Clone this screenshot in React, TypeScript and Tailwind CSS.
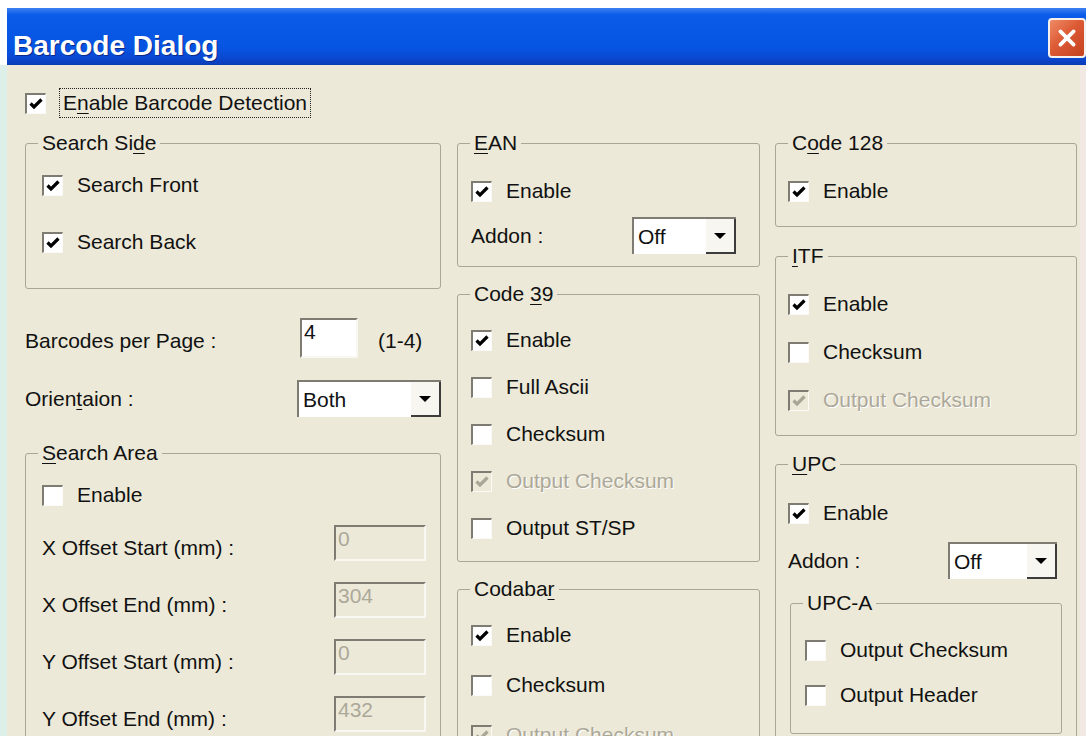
import type { ReactNode } from "react";

// text with one access-key letter underlined
function Label({ text, u }: { text: string; u?: number }) {
  if (u === undefined) return <>{text}</>;
  return (
    <>
      {text.slice(0, u)}
      <span className="underline decoration-1 underline-offset-[3px]">{text[u]}</span>
      {text.slice(u + 1)}
    </>
  );
}

function Box({ checked, disabled }: { checked?: boolean; disabled?: boolean }) {
  return (
    <span
      className={`flex h-[21px] w-[21px] shrink-0 items-center justify-center border-t-2 border-l-2 border-r border-b border-t-[#7d7b72] border-l-[#7d7b72] border-r-[#fbfaf6] border-b-[#fbfaf6] ${
        disabled ? "bg-[#ece9d8]" : "bg-white"
      }`}
    >
      {checked && (
        <svg viewBox="0 0 16 16" className="h-[16px] w-[16px]">
          <path
            d="M2.5 7.5 L6 11 L13.5 3.5"
            fill="none"
            stroke={disabled ? "#a9a698" : "#000"}
            strokeWidth="3.2"
          />
        </svg>
      )}
    </span>
  );
}

function Check({
  label,
  checked,
  disabled,
  className = "",
}: {
  label: string;
  checked?: boolean;
  disabled?: boolean;
  className?: string;
}) {
  return (
    <div className={`flex h-[28px] items-center gap-[14px] ${className}`}>
      <Box checked={checked} disabled={disabled} />
      <span className={disabled ? "text-[#aca899] [text-shadow:1px_1px_0_#fff]" : ""}>{label}</span>
    </div>
  );
}

function Edit({ value, disabled, className = "" }: { value: string; disabled?: boolean; className?: string }) {
  return (
    <div
      className={`shrink-0 border-t-2 border-l-2 border-r-2 border-b-2 border-t-[#7d7b72] border-l-[#7d7b72] border-r-[#f8f7f2] border-b-[#f8f7f2] px-[2px] leading-[24px] ${
        disabled ? "bg-[#ece9d8] text-[#aca899]" : "bg-white"
      } ${className}`}
    >
      {value}
    </div>
  );
}

function Combo({ value, className = "" }: { value: string; className?: string }) {
  return (
    <div className={`flex shrink-0 border-t-2 border-l-2 border-t-[#7d7b72] border-l-[#7d7b72] bg-white ${className}`}>
      <span className="flex-1 self-center pl-[4px]">{value}</span>
      <span className="flex w-[30px] items-center justify-center border-r-2 border-b-2 border-[#3c3c3c] bg-[#f7f6f1]">
        <svg viewBox="0 0 12 6" className="h-[6px] w-[12px]">
          <path d="M0 0h12L6 6z" fill="#000" />
        </svg>
      </span>
    </div>
  );
}

function Group({
  label,
  u,
  className = "",
  children,
}: {
  label: string;
  u?: number;
  className?: string;
  children: ReactNode;
}) {
  return (
    <fieldset className={`min-w-0 shrink-0 rounded-[3px] border border-[#a8a698] ${className}`}>
      <legend className="ml-[12px] px-[4px] leading-[24px]">
        <Label text={label} u={u} />
      </legend>
      {children}
    </fieldset>
  );
}

const offsets = [
  { label: "X Offset Start (mm) :", value: "0", mt: "mt-[16px]" },
  { label: "X Offset End (mm) :", value: "304", mt: "mt-[21px]" },
  { label: "Y Offset Start (mm) :", value: "0", mt: "mt-[21px]" },
  { label: "Y Offset End (mm) :", value: "432", mt: "mt-[21px]" },
];

export default function App() {
  return (
    <div className="flex h-[736px] w-[1086px] flex-col overflow-hidden bg-white font-['Liberation_Sans',Arial,sans-serif]">
      <div className="h-[8px] shrink-0" />

      {/* caption bar */}
      <div className="ml-[7px] flex h-[57px] shrink-0 items-start justify-between bg-[linear-gradient(180deg,#3d80f2_0%,#0b5be8_12%,#0654e2_70%,#0a48d0_88%,#0b3cb6_100%)]">
        <span className="ml-[6px] mt-[24px] text-[28px] font-bold leading-[28px] text-white [text-shadow:1px_1px_0_#0a2a8a]">
          Barcode Dialog
        </span>
        <div className="mt-[10px] flex h-[40px] w-[38px] items-center justify-center rounded-[4px] border-2 border-[#f4f1ee] bg-[linear-gradient(135deg,#ef8c67_0%,#dc5a34_45%,#c4421f_100%)]">
          <svg viewBox="0 0 20 20" className="h-[22px] w-[22px]">
            <path d="M4 4 L16 16 M16 4 L4 16" stroke="#fff" strokeWidth="3.4" strokeLinecap="round" />
          </svg>
        </div>
      </div>

      <div className="flex min-h-0 flex-1">
        <div className="w-[7px] shrink-0 bg-[#dcefe9]" />

        <div className="flex-1 bg-[#ece9d8] pl-[18px] pt-[23px] text-[21px] leading-[24px] text-[#111]">
          <div className="flex h-[30px] items-center">
            <Box checked />
            <span className="ml-[13px] flex h-[30px] items-center border border-dotted border-[#222] px-[3px]">
              <Label text="Enable Barcode Detection" u={1} />
            </span>
          </div>

          <div className="mt-[13px] flex items-start">
            {/* left column */}
            <div className="flex w-[416px] shrink-0 flex-col">
              <Group label="Search Side" u={9} className="h-[158px]">
                <div className="flex flex-col pl-[16px]">
                  <Check className="mt-[16px]" label="Search Front" checked />
                  <Check className="mt-[29px]" label="Search Back" checked />
                </div>
              </Group>

              <div className="mt-[29px] flex items-start">
                <span className="mt-[11px] w-[275px]">Barcodes per Page :</span>
                <Edit value="4" className="h-[40px] w-[58px]" />
                <span className="ml-[20px] mt-[11px]">(1-4)</span>
              </div>

              <div className="mt-[22px] flex items-center">
                <span className="w-[272px]">
                  <Label text="Orientaion :" u={5} />
                </span>
                <Combo value="Both" className="h-[37px] w-[144px]" />
              </div>

              <Group label="Search Area" u={0} className="mt-[24px] h-[320px]">
                <div className="flex flex-col pl-[16px]">
                  <Check className="mt-[16px]" label="Enable" />
                  {offsets.map((o) => (
                    <div key={o.label} className={`flex items-start ${o.mt}`}>
                      <span className="mt-[11px] w-[292px]">{o.label}</span>
                      <Edit value={o.value} disabled className="h-[36px] w-[92px]" />
                    </div>
                  ))}
                </div>
              </Group>
            </div>

            {/* middle column */}
            <div className="ml-[16px] flex w-[303px] shrink-0 flex-col">
              <Group label="EAN" u={0} className="h-[136px]">
                <div className="flex flex-col pl-[13px]">
                  <Check className="mt-[22px]" label="Enable" checked />
                  <div className="mt-[12px] flex items-center">
                    <span className="w-[161px]">Addon :</span>
                    <Combo value="Off" className="h-[37px] w-[104px]" />
                  </div>
                </div>
              </Group>

              <Group label="Code 39" u={5} className="mt-[15px] h-[280px]">
                <div className="flex flex-col gap-[19px] pl-[13px] pt-[20px]">
                  <Check label="Enable" checked />
                  <Check label="Full Ascii" />
                  <Check label="Checksum" />
                  <Check label="Output Checksum" checked disabled />
                  <Check label="Output ST/SP" />
                </div>
              </Group>

              <Group label="Codabar" u={6} className="mt-[15px] h-[200px]">
                <div className="flex flex-col gap-[22px] pl-[13px] pt-[20px]">
                  <Check label="Enable" checked />
                  <Check label="Checksum" />
                  <Check label="Output Checksum" checked disabled />
                </div>
              </Group>
            </div>

            {/* right column */}
            <div className="ml-[15px] flex w-[302px] shrink-0 flex-col">
              <Group label="Code 128" u={1} className="h-[96px]">
                <div className="pl-[12px] pt-[22px]">
                  <Check label="Enable" checked />
                </div>
              </Group>

              <Group label="ITF" u={0} className="mt-[17px] h-[192px]">
                <div className="flex flex-col gap-[20px] pl-[12px] pt-[22px]">
                  <Check label="Enable" checked />
                  <Check label="Checksum" />
                  <Check label="Output Checksum" checked disabled />
                </div>
              </Group>

              <Group label="UPC" u={0} className="mt-[16px] h-[300px]">
                <div className="flex flex-col pl-[12px]">
                  <Check className="mt-[23px]" label="Enable" checked />
                  <div className="mt-[15px] flex items-center">
                    <span className="w-[160px]">Addon :</span>
                    <Combo value="Off" className="h-[37px] w-[109px]" />
                  </div>
                  <Group label="UPC-A" className="ml-[2px] mt-[12px] h-[143px] w-[272px]">
                    <div className="flex flex-col gap-[17px] pl-[14px] pt-[21px]">
                      <Check label="Output Checksum" />
                      <Check label="Output Header" />
                    </div>
                  </Group>
                </div>
              </Group>
            </div>
          </div>
        </div>

        <div className="w-[6px] shrink-0 bg-[#f2e9e4]" />
      </div>
    </div>
  );
}
